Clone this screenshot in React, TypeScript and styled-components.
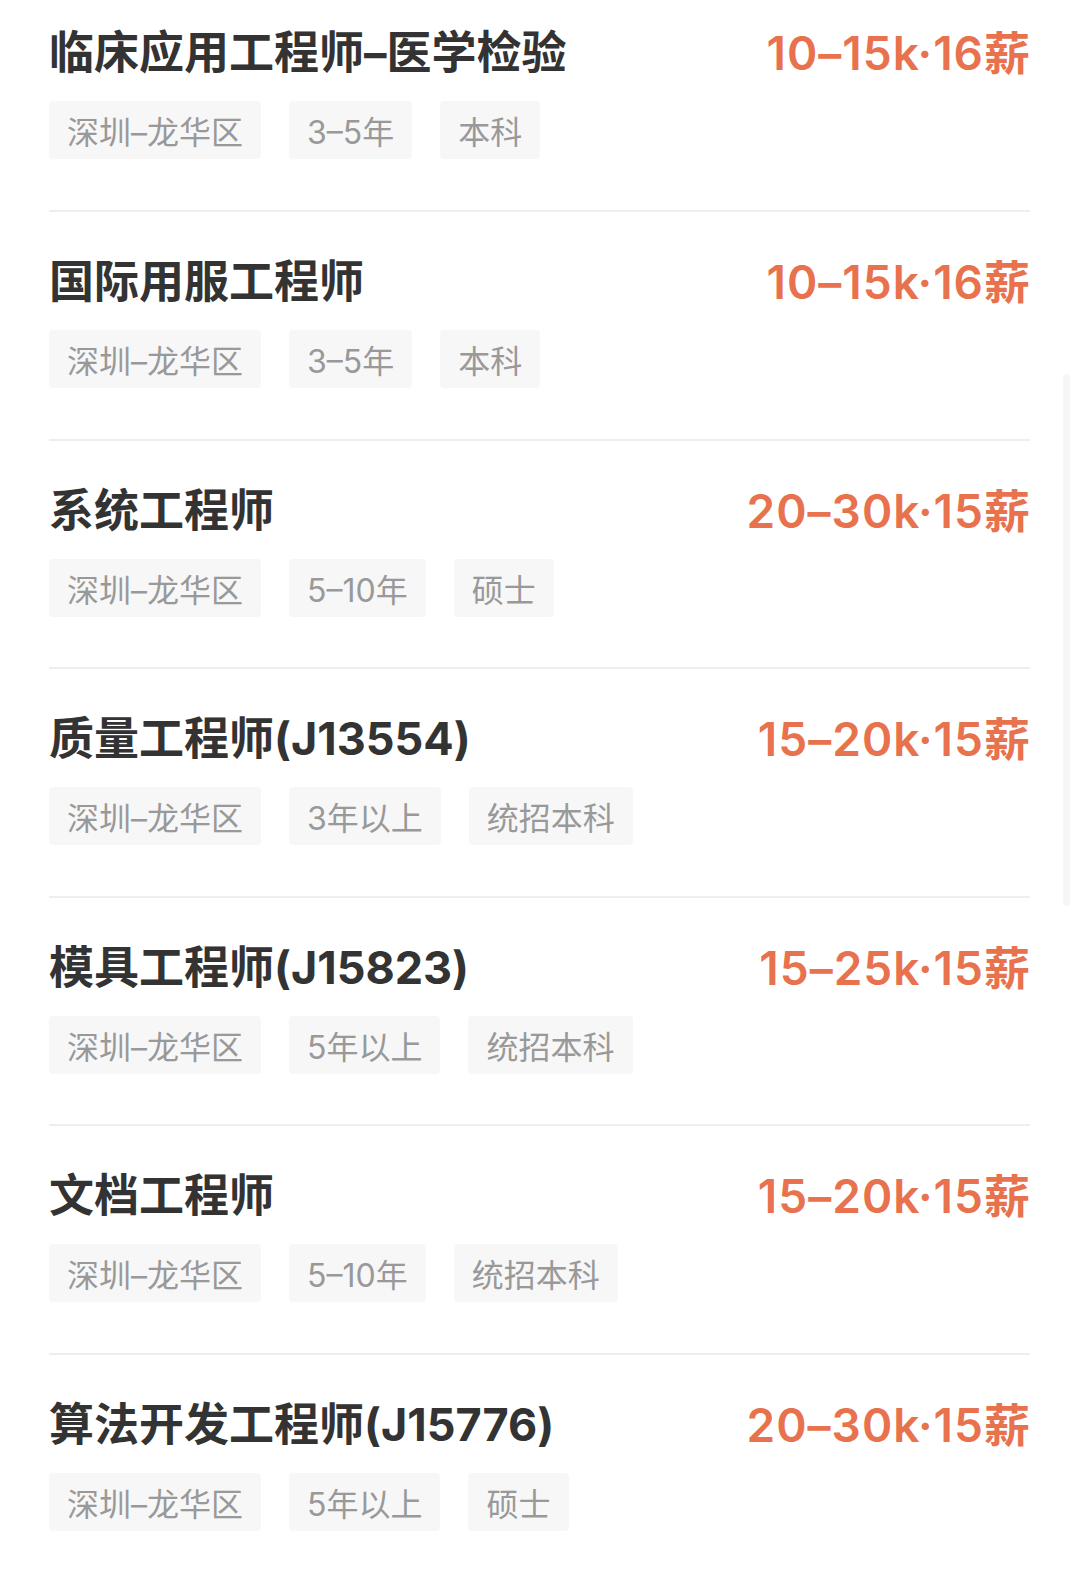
import styled, { createGlobalStyle } from 'styled-components';

type Job = {
  title: string;
  salary: string;
  tags: string[];
};

const jobs: Job[] = [
  { title: '临床应用工程师–医学检验', salary: '10–15k·16薪', tags: ['深圳–龙华区', '3–5年', '本科'] },
  { title: '国际用服工程师', salary: '10–15k·16薪', tags: ['深圳–龙华区', '3–5年', '本科'] },
  { title: '系统工程师', salary: '20–30k·15薪', tags: ['深圳–龙华区', '5–10年', '硕士'] },
  { title: '质量工程师(J13554)', salary: '15–20k·15薪', tags: ['深圳–龙华区', '3年以上', '统招本科'] },
  { title: '模具工程师(J15823)', salary: '15–25k·15薪', tags: ['深圳–龙华区', '5年以上', '统招本科'] },
  { title: '文档工程师', salary: '15–20k·15薪', tags: ['深圳–龙华区', '5–10年', '统招本科'] },
  { title: '算法开发工程师(J15776)', salary: '20–30k·15薪', tags: ['深圳–龙华区', '5年以上', '硕士'] },
];

function App() {
  return (
    <>
      <GlobalStyle />
      <StJobList>
        {jobs.map((job) => (
          <StJobItem key={job.title}>
            <StHeadRow>
              <StTitle>{job.title}</StTitle>
              <StSalary>{job.salary}</StSalary>
            </StHeadRow>
            <StTagRow>
              {job.tags.map((tag) => (
                <StTag key={tag}>{tag}</StTag>
              ))}
            </StTagRow>
          </StJobItem>
        ))}
      </StJobList>
      <StScrollBar />
    </>
  );
}

export default App;

const GlobalStyle = createGlobalStyle`
  html, body {
    margin: 0;
    padding: 0;
    background: #ffffff;
  }

  body {
    height: 1577px;
    overflow: hidden;
    font-family: Inter, 'Noto Sans CJK SC', sans-serif;
  }
`;

const StJobList = styled.main`
  display: flex;
  flex-direction: column;

  padding: 0 50px 0 49px;
`;

const StJobItem = styled.section`
  display: flex;
  flex-direction: column;
  gap: 18px;

  padding: 40px 0 50.6px 0;

  border-bottom: 2px solid #eeeeee;

  &:first-of-type {
    padding-top: 23px;
    padding-bottom: 51px;
  }
`;

const StHeadRow = styled.div`
  display: flex;
  justify-content: space-between;
  align-items: center;

  height: 60px;
`;

const StTitle = styled.h2`
  margin: 0;

  color: #333333;
  font-weight: 700;
  font-size: 45px;
  line-height: 60px;
  white-space: nowrap;
`;

const StSalary = styled.span`
  margin-right: -1px;

  color: #e8724e;
  font-weight: 600;
  font-size: 46px;
  line-height: 60px;
  letter-spacing: 1px;
  font-variant-numeric: proportional-nums;
  white-space: nowrap;
`;

const StTagRow = styled.div`
  display: flex;
  gap: 28px;
`;

const StTag = styled.span`
  display: flex;
  align-items: center;

  height: 58px;
  padding: 0 18px;

  border-radius: 4px;
  background-color: #f7f7f7;
  color: #999999;
  font-size: 32px;
  white-space: nowrap;
`;

const StScrollBar = styled.div`
  position: fixed;
  top: 374px;
  right: 10px;

  width: 7px;
  height: 532px;

  border-radius: 4px;
  background-color: #f6f6f6;
`;
